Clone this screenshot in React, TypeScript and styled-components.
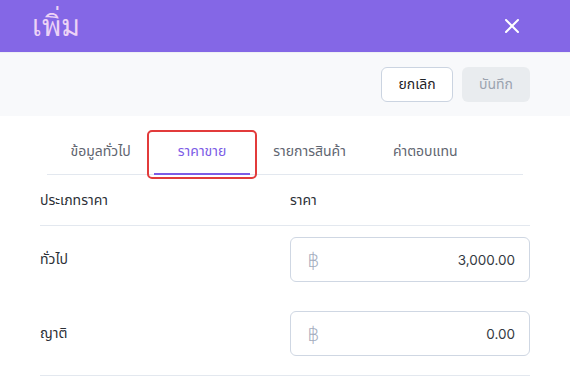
import React from 'react'
import styled, { createGlobalStyle, css } from 'styled-components'

const GlobalStyle = createGlobalStyle`
  html, body {
    margin: 0;
    padding: 0;
    background: #ffffff;
  }
  body {
    font-family: Inter, 'Noto Sans', 'Noto Sans Thai', sans-serif;
    color: #2b2f36;
  }
  * {
    box-sizing: border-box;
  }
`

const tabs = ['ข้อมูลทั่วไป', 'ราคาขาย', 'รายการสินค้า', 'ค่าตอบแทน']

const prices = [
  { label: 'ทั่วไป', value: '3,000.00' },
  { label: 'ญาติ', value: '0.00' },
]

const App: React.FC = () => {
  return (
    <Modal>
      <GlobalStyle />
      <Header>
        <Title>เพิ่ม</Title>
        <CloseButton aria-label="close">
          <svg width="14" height="14" viewBox="0 0 14 14">
            <path d="M1 1 L13 13 M13 1 L1 13" stroke="#fff" strokeWidth="2" strokeLinecap="round" />
          </svg>
        </CloseButton>
      </Header>
      <ActionBar>
        <CancelButton>ยกเลิก</CancelButton>
        <SaveButton disabled>บันทึก</SaveButton>
      </ActionBar>
      <Body>
        <TabList>
          {tabs.map((t, i) => (
            <Tab key={t} $active={i === 1}>{t}</Tab>
          ))}
        </TabList>
        <PriceTable>
          <HeadRow>
            <Cell>ประเภทราคา</Cell>
            <Cell>ราคา</Cell>
          </HeadRow>
          {prices.map((p) => (
            <Row key={p.label}>
              <Cell>{p.label}</Cell>
              <PriceInput>
                <Baht>฿</Baht>
                <Value>{p.value}</Value>
              </PriceInput>
            </Row>
          ))}
        </PriceTable>
      </Body>
    </Modal>
  )
}

const Modal = styled.div`
  width: 570px;
  height: 392px;
  overflow: hidden;
  background: #ffffff;
`

const Header = styled.header`
  height: 52px;
  background-color: #8467e6;
  display: flex;
  align-items: center;
  justify-content: space-between;
  padding: 0 51px 0 32px;
`

const Title = styled.h1`
  margin: 0;
  font-family: serif;
  font-weight: normal;
  font-size: 29px;
  line-height: 1;
  color: #ecd3f6;
`

const CloseButton = styled.button`
  background: transparent;
  border: none;
  padding: 0;
  display: flex;
  cursor: pointer;
`

const ActionBar = styled.div`
  height: 64px;
  background-color: #f8f9fb;
  border-top: 1px solid #eef0f4;
  display: flex;
  align-items: center;
  justify-content: flex-end;
  gap: 9px;
  padding: 0 40px 0 0;
`

const buttonBase = css`
  height: 35px;
  border-radius: 6px;
  font-family: inherit;
  font-size: 14px;
  padding: 0;
`

const CancelButton = styled.button`
  ${buttonBase}
  width: 72px;
  background: #ffffff;
  border: 1px solid #cbd4e1;
  color: #1f2328;
`

const SaveButton = styled.button`
  ${buttonBase}
  width: 68px;
  background: #e9ecef;
  border: none;
  color: #9ba3af;
`

const Body = styled.div`
  padding: 14px 40px 0;
`

const TabList = styled.div`
  display: flex;
  margin: 0 7px;
  border-bottom: 1px solid #e3e8ef;
`

const Tab = styled.div<{ $active?: boolean }>`
  position: relative;
  padding: 0 23.5px;
  height: 45px;
  display: flex;
  align-items: center;
  font-size: 14px;
  color: ${(p) => (p.$active ? '#7c5ce6' : '#5f6570')};
  border-bottom: 2px solid ${(p) => (p.$active ? '#7c5ce6' : 'transparent')};
  margin-bottom: -1px;

  ${(p) =>
    p.$active &&
    css`
      &::after {
        content: '';
        position: absolute;
        inset: 0 -7px -6px -7px;
        border: 2px solid #e23b3b;
        border-radius: 5px;
      }
    `}
`

const PriceTable = styled.div`
  display: flex;
  flex-direction: column;
`

const HeadRow = styled.div`
  display: grid;
  grid-template-columns: 250px 1fr;
  align-items: center;
  height: 51px;
  font-size: 14px;
  color: #2b2f36;
  border-bottom: 1px solid #e3e8ef;
`

const Row = styled.div`
  display: grid;
  grid-template-columns: 250px 1fr;
  align-items: center;
  padding: 11px 0 17px;
  font-size: 14px;
  color: #2b2f36;
  &:last-child {
    padding: 12px 0 19px;
    border-bottom: 1px solid #e3e8ef;
  }
`

const Cell = styled.div``

const PriceInput = styled.div`
  height: 45px;
  border: 1px solid #cfd7e3;
  border-radius: 6px;
  display: flex;
  align-items: center;
  justify-content: space-between;
  padding: 0 14px 0 16px;
  background: #ffffff;
`

const Baht = styled.span`
  font-size: 20px;
  line-height: 1;
  color: #a3acbd;
  font-family: 'DejaVu Sans', sans-serif;
  font-weight: 300;
`

const Value = styled.span`
  font-size: 13.5px;
  color: #353a42;
`

export default App
